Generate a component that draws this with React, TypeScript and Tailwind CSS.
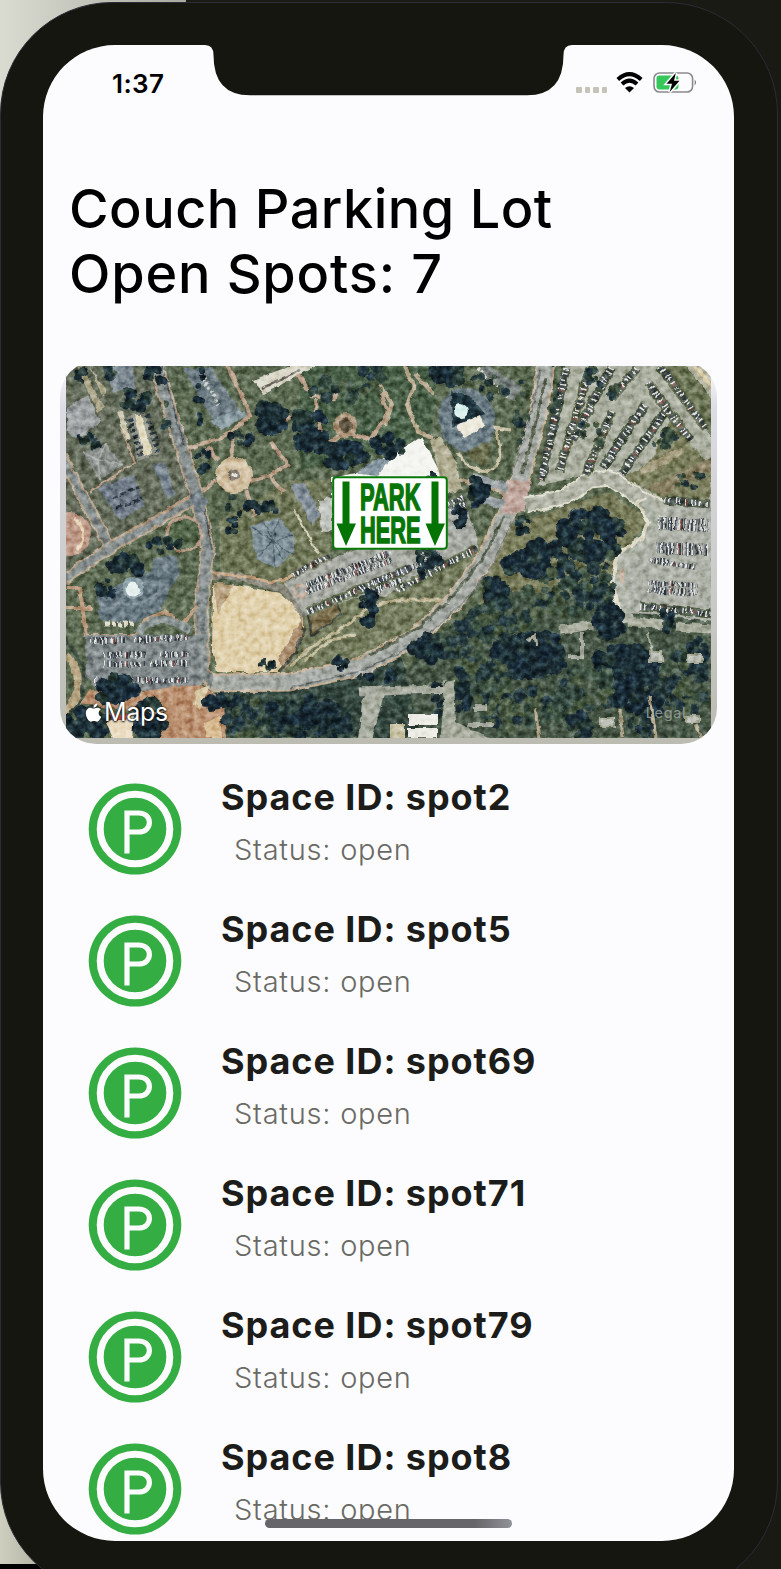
import React from "react";
import { FaApple } from "react-icons/fa";

const spots = ["spot2", "spot5", "spot69", "spot71", "spot79", "spot8"];

function createRandom(seed: number) {
  let s = seed;
  return () => {
    s = (s * 1664525 + 1013904223) % 4294967296;
    return s / 4294967296;
  };
}

type Cluster = [cx: number, cy: number, rx: number, ry: number, count: number, size: number, tone: "dark" | "mid"];

const clusters: Cluster[] = [
  [272, 418, 15, 15, 20, 8, "dark"],
  [310, 432, 16, 22, 26, 8, "dark"],
  [345, 455, 22, 12, 26, 8, "dark"],
  [335, 390, 26, 16, 14, 7, "mid"],
  [370, 380, 14, 18, 10, 7, "mid"],
  [390, 445, 16, 10, 14, 7, "dark"],
  [135, 400, 15, 9, 16, 6, "dark"],
  [155, 375, 12, 10, 10, 5, "dark"],
  [105, 372, 8, 8, 5, 5, "mid"],
  [83, 375, 10, 8, 6, 5, "dark"],
  [85, 442, 16, 6, 10, 5, "dark"],
  [200, 395, 7, 32, 8, 5, "dark"],
  [165, 425, 5, 25, 8, 4, "mid"],
  [203, 460, 7, 12, 7, 5, "dark"],
  [242, 438, 12, 8, 10, 5, "dark"],
  [232, 515, 8, 22, 9, 5, "dark"],
  [260, 508, 18, 7, 16, 6, "dark"],
  [165, 545, 16, 8, 10, 5, "dark"],
  [130, 564, 18, 8, 22, 7, "dark"],
  [107, 588, 10, 8, 12, 5, "dark"],
  [448, 375, 14, 13, 20, 8, "dark"],
  [490, 385, 22, 12, 12, 5, "mid"],
  [520, 410, 4, 34, 10, 5, "mid"],
  [526, 400, 3, 26, 6, 4, "mid"],
  [435, 480, 8, 6, 6, 5, "dark"],
  [478, 490, 9, 16, 18, 6, "dark"],
  [458, 520, 7, 11, 10, 5, "dark"],
  [428, 562, 12, 18, 17, 6, "dark"],
  [367, 608, 8, 18, 18, 6, "dark"],
  [341, 662, 6, 10, 9, 5, "dark"],
  [267, 665, 7, 5, 6, 4, "dark"],
  [116, 690, 18, 15, 26, 8, "dark"],
  [88, 725, 24, 14, 28, 9, "dark"],
  [151, 720, 16, 18, 26, 8, "dark"],
  [224, 704, 20, 7, 16, 6, "dark"],
  [258, 720, 34, 20, 36, 7, "mid"],
  [305, 716, 40, 20, 56, 8, "dark"],
  [330, 720, 20, 18, 20, 7, "dark"],
  [385, 676, 25, 4, 14, 5, "dark"],
  [431, 648, 20, 12, 26, 7, "dark"],
  [465, 640, 25, 20, 32, 7, "mid"],
  [520, 565, 14, 10, 16, 8, "dark"],
  [545, 560, 22, 22, 40, 8, "dark"],
  [497, 590, 11, 14, 22, 7, "dark"],
  [590, 535, 32, 24, 70, 8, "dark"],
  [560, 590, 40, 25, 44, 8, "mid"],
  [603, 580, 12, 34, 38, 7, "mid"],
  [505, 620, 36, 22, 48, 8, "mid"],
  [530, 655, 38, 22, 68, 9, "dark"],
  [480, 680, 30, 24, 48, 8, "mid"],
  [520, 710, 50, 20, 50, 8, "mid"],
  [438, 698, 6, 18, 14, 5, "dark"],
  [462, 690, 7, 22, 18, 6, "dark"],
  [610, 622, 14, 16, 30, 8, "dark"],
  [625, 665, 30, 18, 56, 9, "dark"],
  [590, 690, 36, 22, 48, 8, "mid"],
  [645, 695, 30, 22, 44, 8, "dark"],
  [685, 680, 24, 32, 38, 7, "mid"],
  [700, 655, 12, 18, 20, 6, "dark"],
  [668, 622, 8, 14, 12, 5, "dark"],
  [580, 725, 14, 12, 18, 6, "dark"],
  [640, 725, 14, 10, 14, 6, "dark"],
  [555, 395, 4, 40, 12, 4, "mid"],
  [616, 395, 7, 12, 12, 5, "mid"],
  [592, 380, 8, 14, 10, 5, "mid"],
  [665, 440, 12, 10, 14, 5, "mid"],
  [688, 480, 16, 8, 12, 4, "mid"],
  [590, 435, 14, 16, 10, 4, "mid"],
  [523, 525, 7, 8, 8, 5, "dark"],
  [420, 705, 14, 4, 5, 3, "mid"],
];

const darkTones = ["#14242e", "#18282f", "#1c2f36", "#182a38", "#243733"];
const midTones = ["#24383a", "#31463c", "#3c5040", "#47583f", "#1f323a"];

function Trees() {
  const rand = createRandom(137);
  return (
    <g>
      {clusters.map(([cx, cy, rx, ry, count, size, tone], i) => (
        <g key={i}>
          {Array.from({ length: count }, (_, j) => {
            const angle = rand() * Math.PI * 2;
            const dist = Math.sqrt(rand());
            const tones = tone === "dark" ? darkTones : midTones;
            return (
              <circle
                key={j}
                cx={(cx + Math.cos(angle) * dist * rx).toFixed(1)}
                cy={(cy + Math.sin(angle) * dist * ry).toFixed(1)}
                r={(size * (0.45 + rand() * 0.5)).toFixed(1)}
                fill={tones[Math.floor(rand() * tones.length)]}
              />
            );
          })}
        </g>
      ))}
    </g>
  );
}

type Row = [x1: number, y1: number, x2: number, y2: number, bed?: string];

const carRows: Row[] = [
  [566, 368, 541, 480, "#46533f"],
  [590, 368, 559, 472, "#56603f"],
  [611, 368, 573, 440, "#525d45"],
  [637, 368, 612, 398, "#525d45"],
  [612, 412, 586, 474, "#56603f"],
  [645, 404, 603, 468, "#46533f"],
  [666, 410, 622, 474, "#46533f"],
  [648, 383, 690, 440, "#5c6648"],
  [660, 366, 706, 428, "#5c6648"],
  [664, 500, 710, 504, "#4c5940"],
  [658, 520, 708, 523],
  [658, 526, 708, 529],
  [656, 545, 708, 547],
  [656, 551, 708, 553],
  [650, 560, 696, 567],
  [648, 583, 698, 586],
  [648, 590, 698, 593],
  [640, 606, 710, 614, "#4c5940"],
  [292, 575, 330, 556, "#7a7b62"],
  [306, 585, 390, 553],
  [306, 592, 392, 560],
  [307, 612, 410, 568, "#64704f"],
  [366, 594, 402, 580],
  [398, 590, 476, 549, "#64704f"],
  [372, 583, 440, 556],
  [448, 505, 464, 497],
  [450, 512, 466, 504],
  [90, 640, 126, 640],
  [134, 640, 190, 637],
  [104, 655, 145, 655],
  [160, 655, 190, 654],
  [104, 664, 145, 664],
  [150, 664, 190, 663],
  [95, 681, 188, 680],
];

function ParkedCars() {
  return (
    <g>
      {carRows.map(([x1, y1, x2, y2, bed], i) => (
        <g key={i}>
          {bed && <path d={`M${x1} ${y1}L${x2} ${y2}`} stroke={bed} strokeWidth="9" />}
          <path d={`M${x1} ${y1}L${x2} ${y2}`} stroke="#3b4450" strokeWidth="6" strokeDasharray="2 1.3" />
          <path
            d={`M${x1} ${y1}L${x2} ${y2}`}
            stroke="#e4e4de"
            strokeWidth="5.5"
            strokeDasharray="1.5 3.4 1.7 5.2 1.4 2.2"
          />
          <path d={`M${x1} ${y1}L${x2} ${y2}`} stroke="#81443c" strokeWidth="5" strokeDasharray="1.5 29" strokeDashoffset="8" />
        </g>
      ))}
    </g>
  );
}

function Road({ d, width, edge = "#b7a48b", fill = "#878e8e" }: { d: string; width: number; edge?: string; fill?: string }) {
  return (
    <g fill="none" strokeLinejoin="round">
      <path d={d} stroke={edge} strokeWidth={width + 4} />
      <path d={d} stroke={fill} strokeWidth={width} />
    </g>
  );
}

function Aerial() {
  return (
    <svg className="block h-[372px] w-[645px]" viewBox="66 366 645 372">
      <defs>
        <filter id="terrain" x="66" y="366" width="645" height="372" filterUnits="userSpaceOnUse" colorInterpolationFilters="sRGB">
          <feTurbulence type="fractalNoise" baseFrequency="0.12" numOctaves="2" seed="5" result="warp" />
          <feDisplacementMap in="SourceGraphic" in2="warp" scale="5" xChannelSelector="R" yChannelSelector="G" result="ground" />
          <feTurbulence type="fractalNoise" baseFrequency="0.16" numOctaves="3" seed="11" />
          <feColorMatrix values="1.1 0 0 0 -0.03  1.1 0 0 0 -0.03  1.1 0 0 0 -0.03  0 0 0 0 1" result="grain" />
          <feBlend in="grain" in2="ground" mode="soft-light" />
          <feGaussianBlur stdDeviation="0.35" />
        </filter>
      </defs>
      <g filter="url(#terrain)">
        <path d="M56 356H721V748H56Z" fill="#5b6950" />
        <path d="M66 366H150L190 500L66 580Z" fill="#626a58" />
        <path d="M300 366H440L430 440L300 470Z" fill="#485f46" />
        <path d="M290 480H330V570L270 590L220 570V520Z" fill="#6e7656" />
        <path d="M215 675L330 670L430 625L500 530L450 545L305 615Z" fill="#737b5c" />
        <path d="M500 530L540 515L610 492L650 520L615 560L620 620L470 640Z" fill="#777a57" />
        <path d="M370 738L420 650L500 590L620 600L711 610V738Z" fill="#465645" />
        <path d="M200 690L400 650L420 738H200Z" fill="#33463e" />

        <path d="M82 366L104 408L98 412L76 366ZM90 366L106 392L102 396" fill="#aea88c" />
        <path d="M67 408L87 395L101 422L77 439L67 430Z" fill="#9da1a2" />
        <path d="M106 366H132L136 388L114 392Z" fill="#7c8891" />
        <path d="M117 411L123 412L130 440L125 438Z" fill="#d0cbb5" />
        <path d="M128 415L145 413L158 453L138 461Z" fill="#8c8f84" />
        <path d="M129 418L142 457M147 415L158 451" stroke="#27343b" strokeWidth="6" strokeDasharray="3 3" />
        <path d="M135 415L141 415L152 453L144 456Z" fill="#e0d9be" />
        <path d="M83 452L105 443L123 465L100 480Z" fill="#888d89" />
        <path d="M83 452L98 460L105 443M98 460L123 465M98 460L100 480" stroke="#a5aaa3" strokeWidth="1.5" fill="none" />
        <path d="M97 488L133 475L145 505L120 521Z" fill="#707b88" />
        <path d="M112 498L139 487M116 508L143 498" stroke="#28343e" strokeWidth="3" strokeDasharray="6 3" />
        <path d="M153 466L165 462L175 493L167 498Z" fill="#788590" />
        <path d="M183 368H211L242 412L217 428Z" fill="#6c7b82" />
        <path d="M203 378L219 405" stroke="#c7cbc5" strokeWidth="4" strokeDasharray="3 2" />
        <path d="M210 420L236 409L250 414L222 430Z" fill="#8b9da3" />
        <path d="M253 380L290 366H315L264 394Z" fill="#d9d7c8" />
        <path d="M262 388L300 370" stroke="#736e66" strokeWidth="2" />
        <path d="M250 526L277 517L294 535L294 552L277 568L257 559Z" fill="#7d8e96" />
        <path d="M273 541L252 527M273 541L278 518M273 541L293 536M273 541L292 554M273 541L275 566M273 541L256 557M273 541L263 522M273 541L284 561" stroke="#50636c" strokeWidth="1.2" />
        <path d="M290 485L305 483L320 515L312 526Z" fill="#84909a" />
        <path d="M318 500L332 498V530L322 532Z" fill="#c2c5bf" />
        <path d="M355 473L407 446L421 437L440 472L448 500L332 500V478Z" fill="#f4f4f0" />
        <path d="M355 473L375 460L392 458L376 476Z" fill="#8899a3" />

        <g fill="none" stroke="#bca28c" strokeWidth="4">
          <path d="M185 449L215 440L234 430L250 415L240 392L228 366" />
          <path d="M233 431L231 462M216 480L198 494M207 447L218 460" />
          <path d="M251 482L270 475L288 465L271 442M246 490L255 516M270 477L284 492" />
          <path d="M295 510L318 554" stroke="#d6cfb8" strokeWidth="2.5" />
          <path d="M298 374L311 396L335 398L337 389M316 399L317 418L327 445L345 432L371 440L388 412L378 385M285 420L300 414" />
          <path d="M90 492L135 462L122 430" strokeWidth="2" />
        </g>
        <circle cx="345" cy="425" r="12" fill="#aa9277" />
        <circle cx="345" cy="425" r="7" fill="#685d49" />

        <g fill="none" stroke="#b9a98e" strokeWidth="4">
          <path d="M404 366L414 386L407 405L418 432L432 437M380 385L392 404L385 425M416 374L434 395" />
          <path d="M432 438L455 478L509 493L512 480" />
        </g>
        <path d="M430 440L442 437L456 462L462 490L448 492L440 476Z" fill="#b2ae93" />
        <path d="M476 368L490 366L523 388L514 400L504 398Z" fill="#77807c" />
        <path d="M478 368L506 398" stroke="#d0cfc2" strokeWidth="4" strokeDasharray="3 2" />

        <Road d="M155 362L182 448L197 498L208 550L202 602L202 672L216 686" width={11} />
        <path d="M162 366L184 446M205 510L212 550" stroke="#566067" strokeWidth="1.5" fill="none" />
        <Road d="M60 454L110 548L60 582" width={8} />
        <Road d="M110 548L197 498" width={8} />
        <path d="M112 541L192 496" stroke="#b69a7f" strokeWidth="2" />
        <path d="M189 496L201 489L209 503L198 513Z" fill="#707c84" />
        <circle cx="234" cy="475" r="18" fill="#d2c0a2" />
        <circle cx="234" cy="475" r="5.5" fill="#827b70" />
        <circle cx="234" cy="475" r="2.5" fill="#e7e6df" />
        <circle cx="70" cy="534" r="21" fill="#bf9a88" />
        <path d="M74 518Q90 532 78 550" stroke="#e5d5b4" strokeWidth="3" fill="none" />
        <circle cx="184" cy="534" r="17" fill="#4e6144" stroke="#b69a85" strokeWidth="3" />

        <path d="M97 597L123 583L150 573L157 557L177 556L179 573L160 610L133 623L100 620Z" fill="#667780" />
        <path d="M100 604L140 604L160 590" stroke="#7a8b92" strokeWidth="3" fill="none" />
        <circle cx="133" cy="588" r="11" fill="#8fa2aa" />
        <circle cx="133" cy="589" r="7.5" fill="#e5efee" />
        <path d="M106 624H134" stroke="#dfdacb" strokeWidth="5" strokeDasharray="4 2" />
        <path d="M66 588H80L86 636L137 636L144 620L165 612L182 624L198 606M66 608H92" stroke="#b99a7d" strokeWidth="4" fill="none" />
        <path d="M138 634Q155 608 190 630" stroke="#85908e" strokeWidth="8" fill="none" />
        <path d="M85 635H197L203 690H98L86 676Z" fill="#80888a" />
        <path d="M66 655Q90 680 66 715" stroke="#b5a27f" strokeWidth="8" fill="none" />
        <path d="M66 638L84 668L82 700L66 720" stroke="#405044" strokeWidth="3" fill="none" />
        <path d="M132 692L200 684L224 700L226 742H158L140 712L80 704L90 690Z" fill="#b98f6e" />
        <path d="M196 690L210 685L200 710L194 704Z" fill="#d7c9a4" />
        <path d="M204 722L220 716L222 738H206Z" fill="#d9bd94" />

        <path d="M213 583L237 585L280 593L304 614L304 632L290 657L280 672L217 672L212 650Z" fill="#e0d0ab" />
        <path d="M213 583L234 584L218 615Z" fill="#b8a280" />
        <path d="M304 615L302 640L285 670L277 660L292 635Z" fill="#a98c6b" />
        <path d="M212 575L240 577L268 585L286 590L305 616" stroke="#8a877b" strokeWidth="8" fill="none" />
        <path d="M212 573L250 577L270 582L285 580L297 572" stroke="#c7a989" strokeWidth="3" fill="none" />
        <path d="M284 583L314 567L448 508L468 510L477 536L477 549L384 596L366 594L306 616Z" fill="#a7aaa2" />
        <path d="M308 616L336 602L341 614L312 637Z" fill="#7b6e4c" stroke="#424941" strokeWidth="2" />
        <path d="M305 628L295 653L277 674" stroke="#454a40" strokeWidth="3" fill="none" />
        <path d="M290 666L310 648L350 623L368 607L398 600L443 600M305 660L330 640L356 635" stroke="#c2ba9a" strokeWidth="3" fill="none" />
        <ellipse cx="300" cy="591" rx="6" ry="6" fill="none" stroke="#c8a995" strokeWidth="2" />

        <Road d="M547 362L537 420L516 492L487 556L455 600L415 638L360 667L290 682L212 683" width={15} edge="#c4b096" fill="#a5a9a4" />
        <path d="M546 376L534 430L522 474M505 516L482 560L455 594L420 626L370 656" stroke="#5d6652" strokeWidth="3" fill="none" />
        <path d="M541 370L528 424L512 474M514 518L490 570L460 606L416 645L360 671L290 688" stroke="#737a78" strokeWidth="1.5" fill="none" />
        <path d="M506 480L532 482L524 512L502 514Z" fill="#bea59b" />
        <path d="M472 477L508 488M474 497L505 505" stroke="#98a0a3" strokeWidth="9" />

        <path d="M566 362H655L714 440V520L660 510L630 484L590 474L538 486Z" fill="#aaae9f" />
        <path d="M666 366H686L714 402V440Z" fill="#6a7352" />
        <path d="M682 362H711V398L706 390Z" fill="#b7b6a2" />
        <path d="M695 366L711 386" stroke="#ded1ac" strokeWidth="3" />
        <path d="M624 478L650 462L672 418L711 468V498L668 502L648 490Z" fill="#787b59" />
        <path d="M640 472L668 458L682 450" stroke="#a49c7e" strokeWidth="7" fill="none" />
        <path d="M646 488L712 458V470L664 495Z" fill="#857c5f" />
        <path d="M662 505H714V622L630 612L616 575L646 530L650 510Z" fill="#abafa5" />
        <Road d="M526 505L565 497L590 480L610 478L640 498L666 510" width={13} edge="#deddcd" fill="#b0b3a5" />
        <path d="M640 500L652 522L645 540L621 555L616 580L623 616" stroke="#e0dccb" strokeWidth="11" fill="none" strokeLinejoin="round" />
        <path d="M644 500L656 522L649 543L625 558L620 580L629 622" stroke="#adb2a6" strokeWidth="11" fill="none" strokeLinejoin="round" />
        <ellipse cx="622" cy="575" rx="2.5" ry="8" fill="#c9b7a6" />

        <path d="M359 692L452 688M446 680L452 738" stroke="#a1a698" strokeWidth="9" />
        <ellipse cx="467" cy="420" rx="28" ry="33" transform="rotate(-15 467 420)" fill="#6b7c84" />
        <path d="M451 391L472 398L485 414L452 426Z" fill="#1d323b" />
        <circle cx="461" cy="411" r="7" fill="#dbf0ee" />
        <path d="M457 425L480 415L485 427L464 438Z" fill="#ece9db" />
        <path d="M458 452Q468 470 487 472Q508 465 495 428L510 430" stroke="#c7bea1" strokeWidth="3" fill="none" />
        <path d="M465 453Q475 466 487 466Q493 450 487 442Z" fill="#6a6d4c" />

        <ParkedCars />
        <Trees />

        <path d="M560 630L592 625M628 621L662 625M676 627L712 629" stroke="#a7ab9b" strokeWidth="9" />
        <path d="M370 687H448L450 694H384L372 740H358L362 702Z" fill="#a8ac9f" />
        <path d="M446 682L454 680L456 722L500 742H440Z" fill="#a4a99a" />
        <path d="M408 714H437V725H408ZM408 728H437V738H408Z" fill="#ecebe4" />
        <path d="M390 724H405V740H390Z" fill="#c9c3a5" />
        <path d="M580 632H584V658H580ZM568 655H584V659H568ZM474 704H487V712H474ZM468 722H494V727H468Z" fill="#a4a99c" />
        <path d="M648 632L652 652M650 652H662V662H650ZM688 655H702V662H688ZM600 718H614V726H600ZM686 716H699V722H686Z" fill="#bcc0b7" stroke="#a4a894" strokeWidth="2" />
        <path d="M620 710L623 738M650 696L656 738M535 708L540 738M696 724L702 740" stroke="#b2a78c" strokeWidth="3" />
        <path d="M527 641L535 636L537 646" stroke="#aaa794" strokeWidth="3" fill="none" />
        <path d="M106 722L134 712L132 740H113Z" fill="#eadbc0" />
        <path d="M109 714H130L126 721H113Z" fill="#b94e42" />
      </g>

      <g>
        <rect x="333.2" y="477.2" width="113.6" height="71.6" rx="3" fill="#fff" stroke="#087808" strokeWidth="2" />
        <path d="M342.5 481.5H349.5V523.5H356L346 546L336.5 523.5H342.5ZM431.5 481.5H438.5V523.5H445L435 546L425.5 523.5H431.5Z" fill="#047404" />
        <g fill="#087508" stroke="#087508" strokeWidth="1.6" fontFamily="Liberation Sans, sans-serif" fontSize="36.5" fontWeight="700">
          <text x="360" y="510.2" textLength="60.5" lengthAdjust="spacingAndGlyphs">PARK</text>
          <text x="360" y="543" textLength="60.5" lengthAdjust="spacingAndGlyphs">HERE</text>
        </g>
      </g>
    </svg>
  );
}

function MapCard() {
  return (
    <div className="relative ml-[17px] h-[383px] w-[657px] overflow-hidden rounded-[36px] bg-gradient-to-b from-[#fbfafe] from-[1%] via-[#dcdce4] via-[12%] to-[#bbbbb1] pt-[5px] pl-[6px]">
      <Aerial />
      <div className="absolute bottom-[17px] left-[23px] flex items-center text-white [text-shadow:0_0_2px_#111,0_1px_2px_#111]">
        <FaApple className="size-[21px] [filter:drop-shadow(0_0_1px_#111)]" />
        <span className="font-[Inter] text-[25px] leading-[30px] tracking-[-0.3px]">Maps</span>
      </div>
      <span className="absolute right-[31px] bottom-[22px] font-[Inter] text-[14.5px] leading-[18px] tracking-[0.6px] text-[#a2aaa6]/80">Legal</span>
    </div>
  );
}

function StatusBar() {
  return (
    <div className="flex h-[76px] items-start justify-between pt-[25px] pr-[36px] pl-[69px]">
      <span className="font-[Inter] text-[26px] leading-[27px] font-[560] tracking-[0.4px] text-black">1:37</span>
      <div className="flex items-start">
        <div className="mt-[17px] flex gap-[3px]">
          {[0, 1, 2, 3].map((i) => (
            <span key={i} className="size-[5.5px] rounded-[1px] bg-[#c3c3b7]" />
          ))}
        </div>
        <svg className="mt-[2px] ml-[9px] h-[21px] w-[27px]" viewBox="0 0 27 21">
          <g fill="none" stroke="#000" strokeWidth="4">
            <path d="M1.8 7.5Q13.5 -3.1 25.2 7.5" />
            <path d="M6 12.1Q13.5 5.3 21 12.1" />
          </g>
          <path d="M9 16Q13.5 12.5 18 16L13.5 20.5Z" />
        </svg>
        <svg className="mt-[1px] ml-[10px] h-[23px] w-[45px]" viewBox="0 0 45 23">
          <rect x="1" y="2" width="38.6" height="19" rx="5.5" fill="none" stroke="#8a8a8d" strokeWidth="1.6" />
          <rect x="3.5" y="4.5" width="22" height="14" rx="3" fill="#35c759" />
          <path d="M41.7 8.5Q44.3 11.5 41.7 14.5Z" fill="#77777b" />
          <path d="M22.8 2L13.5 12.8H19L16.7 21L26.5 9.8H21Z" fill="#000" stroke="#fcfcfe" strokeWidth="3" paintOrder="stroke" />
        </svg>
      </div>
    </div>
  );
}

function ParkingIcon() {
  return (
    <svg className="mt-px h-[92px] w-[94px] shrink-0" viewBox="0 0 94 92">
      <ellipse cx="47" cy="46" rx="46.3" ry="45.6" fill="#34ad42" />
      <ellipse cx="47" cy="46" rx="34.8" ry="34.8" fill="none" stroke="#fcfcfe" strokeWidth="7" />
      <path d="M39 70.5V30H50.5C65 30 65 49 50.5 49H39" fill="none" stroke="#fcfcfe" strokeWidth="5.2" />
    </svg>
  );
}

function SpotRow({ id }: { id: string }) {
  return (
    <li className="flex h-[132px] items-start pl-[45px]">
      <ParkingIcon />
      <div className="ml-[39px] whitespace-nowrap">
        <div className="-mt-[7px] font-[Inter] text-[36px] leading-[44px] font-[650] tracking-[0.95px] text-[#1c1c1a]">
          Space ID: {id}
        </div>
        <div className="mt-[13px] pl-[13px] font-[Inter] text-[29px] leading-[36px] font-[360] tracking-[0.75px] text-[#6a6a64]">
          Status: open
        </div>
      </div>
    </li>
  );
}

export default function App() {
  return (
    <div className="relative isolate h-[1569px] w-[781px] overflow-hidden bg-[#191a14]">
      <div className="absolute top-0 left-0 -z-10 h-[130px] w-[186px] bg-gradient-to-r from-[#dadbd1] to-[#aaaba0]" />
      <div className="absolute bottom-0 left-0 -z-10 h-[110px] w-[80px] border-b-[5px] border-black bg-gradient-to-r from-[#cfcfbf] to-[#99998e]" />
      <div className="mt-[2px] h-[1592px] w-[778px] rounded-[112px] border border-[#2c2b38] bg-[#161610] pt-[42px] pl-[42px]">
        <main className="relative h-[1496px] w-[691px] overflow-hidden rounded-[72px] bg-[#fcfcfe]">
          <StatusBar />
          <h1 className="mt-[55px] pl-[26px] font-[Inter] text-[54px] leading-[65px] font-[480] tracking-[0.5px] whitespace-nowrap text-black">
            Couch Parking Lot
            <br />
            <span className="tracking-[0.85px]">Open Spots: 7</span>
          </h1>
          <div className="mt-[55px]">
            <MapCard />
          </div>
          <ul className="mt-[38px]">
            {spots.map((id) => (
              <SpotRow key={id} id={id} />
            ))}
          </ul>
          <div className="absolute bottom-[13px] left-[222px] h-[9px] w-[247px] rounded-full bg-gradient-to-r from-[#66666a] from-85% to-[#919199]" />
          <svg className="absolute top-0 left-[157px] h-[51px] w-[375px]" viewBox="200 45 375 51">
            <path d="M200 44V45H205Q213.5 45 213.5 55Q213.5 95.3 250 95.3H527Q563.5 95.3 563.5 55Q563.5 45 572 45H575V44Z" fill="#161610" />
          </svg>
        </main>
      </div>
    </div>
  );
}
